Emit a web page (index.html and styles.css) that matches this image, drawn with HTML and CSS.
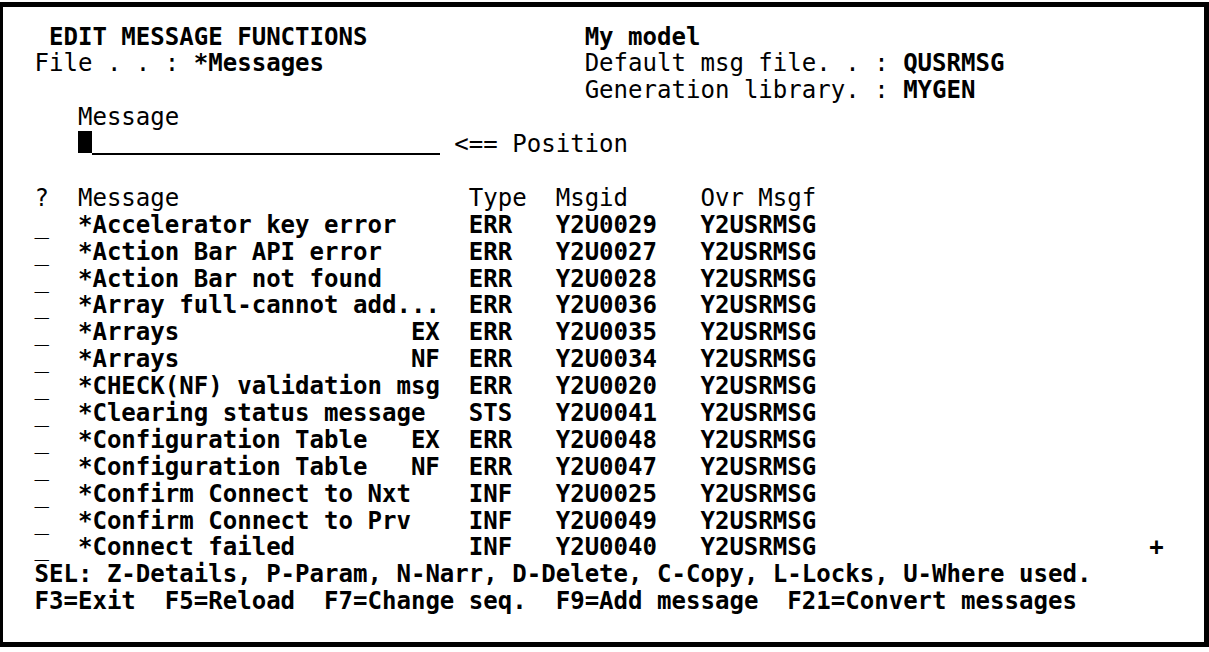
FILE: index.html
```html
<!DOCTYPE html>
<html>
<head>
<meta charset="utf-8">
<link rel="stylesheet" href="styles.css">
</head>
<body>
<div class="screen">
  <div class="head">
    <div class="head-left">
      <div class="line b"> EDIT MESSAGE FUNCTIONS</div>
      <div class="line">File . . : <span class="b">*Messages</span></div>
      <div class="line"></div>
    </div>
    <div class="head-right">
      <div class="line b">My model</div>
      <div class="kv"><span>Default msg file. . :</span><span class="b">QUSRMSG</span></div>
      <div class="kv"><span>Generation library. :</span><span class="b">MYGEN</span></div>
    </div>
  </div>
  <div class="line indent">Message</div>
  <div class="pos-row">
    <div class="field"><span class="cursor"></span><span class="fill"></span></div>
    <span class="pos-label">&lt;== Position</span>
  </div>
  <div class="line"></div>
  <div class="list">
    <span>?</span><span>Message</span><span>Type</span><span>Msgid</span><span>Ovr Msgf</span><span></span>

    <span>_</span><span class="b">*Accelerator key error</span><span class="b">ERR</span><span class="b">Y2U0029</span><span class="b">Y2USRMSG</span><span></span>
    <span>_</span><span class="b">*Action Bar API error</span><span class="b">ERR</span><span class="b">Y2U0027</span><span class="b">Y2USRMSG</span><span></span>
    <span>_</span><span class="b">*Action Bar not found</span><span class="b">ERR</span><span class="b">Y2U0028</span><span class="b">Y2USRMSG</span><span></span>
    <span>_</span><span class="b">*Array full-cannot add...</span><span class="b">ERR</span><span class="b">Y2U0036</span><span class="b">Y2USRMSG</span><span></span>
    <span>_</span><span class="b desc"><span>*Arrays</span><span>EX</span></span><span class="b">ERR</span><span class="b">Y2U0035</span><span class="b">Y2USRMSG</span><span></span>
    <span>_</span><span class="b desc"><span>*Arrays</span><span>NF</span></span><span class="b">ERR</span><span class="b">Y2U0034</span><span class="b">Y2USRMSG</span><span></span>
    <span>_</span><span class="b">*CHECK(NF) validation msg</span><span class="b">ERR</span><span class="b">Y2U0020</span><span class="b">Y2USRMSG</span><span></span>
    <span>_</span><span class="b">*Clearing status message</span><span class="b">STS</span><span class="b">Y2U0041</span><span class="b">Y2USRMSG</span><span></span>
    <span>_</span><span class="b desc"><span>*Configuration Table</span><span>EX</span></span><span class="b">ERR</span><span class="b">Y2U0048</span><span class="b">Y2USRMSG</span><span></span>
    <span>_</span><span class="b desc"><span>*Configuration Table</span><span>NF</span></span><span class="b">ERR</span><span class="b">Y2U0047</span><span class="b">Y2USRMSG</span><span></span>
    <span>_</span><span class="b">*Confirm Connect to Nxt</span><span class="b">INF</span><span class="b">Y2U0025</span><span class="b">Y2USRMSG</span><span></span>
    <span>_</span><span class="b">*Confirm Connect to Prv</span><span class="b">INF</span><span class="b">Y2U0049</span><span class="b">Y2USRMSG</span><span></span>
    <span>_</span><span class="b">*Connect failed</span><span class="b">INF</span><span class="b">Y2U0040</span><span class="b">Y2USRMSG</span><span class="b">+</span>
  </div>
  <div class="line b">SEL: Z-Details, P-Param, N-Narr, D-Delete, C-Copy, L-Locks, U-Where used.</div>
  <div class="line b">F3=Exit  F5=Reload  F7=Change seq.  F9=Add message  F21=Convert messages</div>
</div>
</body>
</html>
```
FILE: styles.css
```css
html, body {
  margin: 0;
  padding: 0;
  background: #fff;
}

.screen {
  box-sizing: border-box;
  width: 1211px;
  height: 645px;
  margin: 2px 0 0 -2px;
  border: 5px solid #000;
  padding: 16.5px 0 0 31.5px;
  font-family: "DejaVu Sans Mono", monospace;
  font-size: 24.05px;
  line-height: 26.9px;
  color: #000;
  overflow: hidden;
}

.line {
  white-space: pre;
  height: 26.9px;
}

.b {
  font-weight: bold;
}

.head {
  display: flex;
}

.head-left {
  width: 38ch;
}

.kv {
  display: grid;
  grid-template-columns: 22ch auto;
  white-space: pre;
  height: 26.9px;
}

.indent {
  padding-left: 3ch;
}

.pos-row {
  display: flex;
  height: 26.9px;
  padding-left: 3ch;
  white-space: pre;
}

.field {
  display: flex;
  width: 25ch;
  height: 22px;
}

.cursor {
  width: 1ch;
  height: 22px;
  background: #000;
}

.fill {
  flex: 1;
  height: 22px;
  border-bottom: 2px solid #000;
}

.pos-label {
  margin-left: 1ch;
}

.list {
  display: grid;
  grid-template-columns: 3ch 27ch 6ch 10ch 31ch 1ch;
  grid-auto-rows: 26.9px;
  white-space: pre;
}

.desc {
  display: flex;
  justify-content: space-between;
  width: 25ch;
}
```
